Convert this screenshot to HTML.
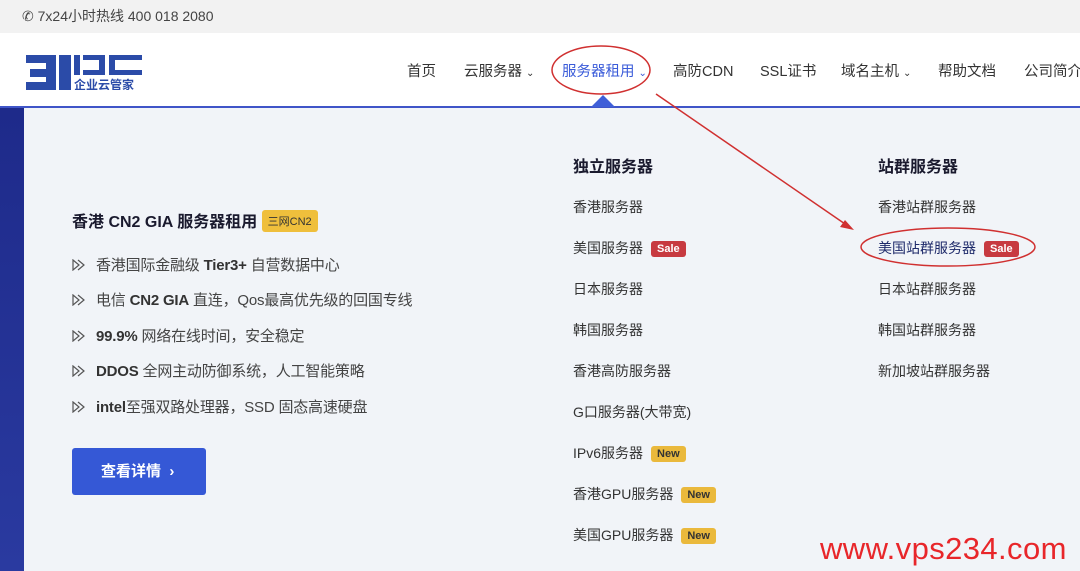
<!DOCTYPE html>
<html><head><meta charset="utf-8"><style>
*{margin:0;padding:0;box-sizing:border-box}
body{width:1080px;height:571px;overflow:hidden;position:relative;background:#f0f3f7;font-family:"Liberation Sans","Noto Sans CJK SC",sans-serif;color:#333}
.a{position:absolute;white-space:nowrap}
.top{left:0;top:0;width:1080px;height:33px;background:#f2f2f2}
.nav{left:0;top:33px;width:1080px;height:74px;background:#fff}
.line{left:0;top:106px;width:1080px;height:2px;background:#3f55c8}
.strip{left:0;top:108px;width:24px;height:463px;background:linear-gradient(#1e2a8a,#2a3aa0)}
.panel{left:24px;top:108px;width:1056px;height:463px;background:#f1f4f8;border-top-left-radius:8px}
.ni{top:60px;font-size:14.5px;color:#333}
.li{font-size:14px;color:#333}
.b{display:inline-block;font-size:11px;font-weight:bold;padding:2px 6px;border-radius:3px;margin-left:8px;vertical-align:1px}
.sale{background:#c73a40;color:#fff}
.new{background:#eab93c;color:#333}
.bl{font-size:15px;color:#444;left:72px;letter-spacing:-0.2px}
.bl svg{margin-right:10px;vertical-align:-1px}
.bl b{color:#333}
</style></head><body>
<div class="a top"></div>
<div class="a" style="left:22px;top:6px;font-size:14px;color:#444">✆ 7x24小时热线 400 018 2080</div>
<div class="a nav"></div>
<div class="a" style="left:26px;top:55px;width:116px;height:35px">
<svg width="116" height="35" viewBox="0 0 116 35"><g fill="#2b4ba8">
<path d="M0 0h30v35H0v-8h20v-5H4v-8h16V8H0z"/><path d="M33 0h12v35H33z"/>
<path d="M48 0h6v20h-6z"/><path d="M57 0h22v20H57v-5h16V5H57z"/><path d="M83 0h33v5H89v10h27v5H83z"/>
</g><text x="48" y="34" font-size="12" font-weight="bold" fill="#2b4ba8" font-family="Noto Sans CJK SC">企业云管家</text></svg></div>
<div class="a ni" style="left:407px">首页</div>
<div class="a ni" style="left:464px">云服务器 <span style="font-size:10px">⌄</span></div>
<div class="a ni" style="left:562px;color:#3a5bd9">服务器租用 <span style="font-size:10px">⌄</span></div>
<div class="a ni" style="left:673px">高防CDN</div>
<div class="a ni" style="left:760px">SSL证书</div>
<div class="a ni" style="left:841px">域名主机 <span style="font-size:10px">⌄</span></div>
<div class="a ni" style="left:938px">帮助文档</div>
<div class="a ni" style="left:1024px">公司简介</div>
<div class="a strip"></div>
<div class="a panel"></div>
<div class="a line"></div>
<div class="a" style="left:591px;top:95px;width:0;height:0;border-left:12px solid transparent;border-right:12px solid transparent;border-bottom:12px solid #3f5fd8"></div>
<div class="a" style="left:72px;top:208px;font-size:16px;font-weight:bold;color:#1a1a2e">香港 CN2 GIA 服务器租用 <span style="display:inline-block;background:#efbf3c;color:#333;font-size:11px;font-weight:normal;padding:3px 6px;border-radius:3px;vertical-align:2px">三网CN2</span></div>
<div class="a bl" style="top:254px"><svg width="14" height="12" viewBox="0 0 14 12"><path d="M1 1l6 5-6 5zM6 1l6 5-6 5" fill="none" stroke="#555" stroke-width="1.2"/></svg>香港国际金融级 <b>Tier3+</b> 自营数据中心</div>
<div class="a bl" style="top:289px"><svg width="14" height="12" viewBox="0 0 14 12"><path d="M1 1l6 5-6 5zM6 1l6 5-6 5" fill="none" stroke="#555" stroke-width="1.2"/></svg>电信 <b>CN2 GIA</b> 直连，Qos最高优先级的回国专线</div>
<div class="a bl" style="top:325px"><svg width="14" height="12" viewBox="0 0 14 12"><path d="M1 1l6 5-6 5zM6 1l6 5-6 5" fill="none" stroke="#555" stroke-width="1.2"/></svg><b>99.9%</b> 网络在线时间，安全稳定</div>
<div class="a bl" style="top:360px"><svg width="14" height="12" viewBox="0 0 14 12"><path d="M1 1l6 5-6 5zM6 1l6 5-6 5" fill="none" stroke="#555" stroke-width="1.2"/></svg><b>DDOS</b> 全网主动防御系统，人工智能策略</div>
<div class="a bl" style="top:396px"><svg width="14" height="12" viewBox="0 0 14 12"><path d="M1 1l6 5-6 5zM6 1l6 5-6 5" fill="none" stroke="#555" stroke-width="1.2"/></svg><b>intel</b>至强双路处理器，SSD 固态高速硬盘</div>
<div class="a" style="left:72px;top:448px;width:134px;height:47px;background:#3558d6;border-radius:3px;color:#fff;font-size:15px;font-weight:bold;line-height:47px;padding-left:29px">查看详情 &nbsp;›</div>
<div class="a" style="left:573px;top:153px;font-size:16px;font-weight:bold;color:#1a1a2e">独立服务器</div>
<div class="a" style="left:878px;top:153px;font-size:16px;font-weight:bold;color:#1a1a2e">站群服务器</div>
<div class="a li" style="left:573px;top:197px">香港服务器</div>
<div class="a li" style="left:573px;top:238px">美国服务器<span class="b sale">Sale</span></div>
<div class="a li" style="left:573px;top:279px">日本服务器</div>
<div class="a li" style="left:573px;top:320px">韩国服务器</div>
<div class="a li" style="left:573px;top:361px">香港高防服务器</div>
<div class="a li" style="left:573px;top:402px">G口服务器(大带宽)</div>
<div class="a li" style="left:573px;top:443px">IPv6服务器<span class="b new">New</span></div>
<div class="a li" style="left:573px;top:484px">香港GPU服务器<span class="b new">New</span></div>
<div class="a li" style="left:573px;top:525px">美国GPU服务器<span class="b new">New</span></div>
<div class="a li" style="left:878px;top:197px">香港站群服务器</div>
<div class="a li" style="left:878px;top:238px;color:#1e2a6a">美国站群服务器<span class="b sale">Sale</span></div>
<div class="a li" style="left:878px;top:279px">日本站群服务器</div>
<div class="a li" style="left:878px;top:320px">韩国站群服务器</div>
<div class="a li" style="left:878px;top:361px">新加坡站群服务器</div>
<svg class="a" style="left:0;top:0" width="1080" height="571">
<ellipse cx="601" cy="70" rx="49" ry="24" fill="none" stroke="#d03030" stroke-width="1.5"/>
<ellipse cx="948" cy="247" rx="87" ry="19" fill="none" stroke="#d03030" stroke-width="1.5"/>
<line x1="656" y1="94" x2="848" y2="226" stroke="#d03030" stroke-width="1.5"/>
<path d="M854 230l-14-3 5-7z" fill="#d03030"/>
</svg>
<div class="a" style="left:820px;top:531px;font-size:31px;color:#e8262a;font-family:'Liberation Sans',sans-serif;letter-spacing:0.4px">www.vps234.com</div>
</body></html>
